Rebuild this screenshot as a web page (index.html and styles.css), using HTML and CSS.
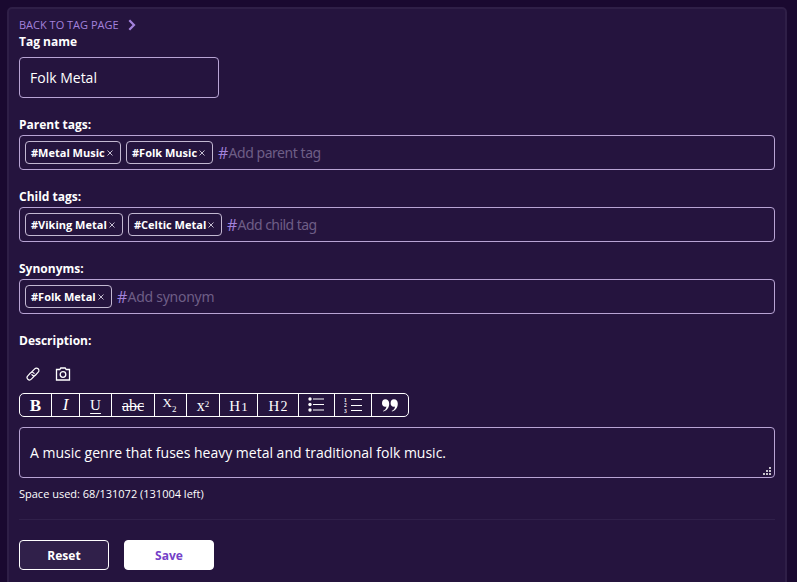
FILE: index.html
```html
<!DOCTYPE html>
<html lang="en">
<head>
<meta charset="utf-8">
<title>Edit tag</title>
<link rel="stylesheet" href="styles.css">
</head>
<body>
<main class="panel">
  <a class="back">BACK TO TAG PAGE
    <svg class="chevron" width="8" height="12" viewBox="0 0 8 12"><path d="M1.3 1.2 6 6 1.3 10.8" fill="none" stroke="currentColor" stroke-width="2.2"/></svg>
  </a>
  <div class="label">Tag name</div>
  <div class="name-input">Folk Metal</div>

  <div class="label spaced">Parent tags:</div>
  <div class="tags">
    <span class="chip c96">#Metal Music<svg class="x" viewBox="0 0 6 6"><path d="M.5.5l5 5m0-5l-5 5"/></svg></span>
    <span class="chip c87">#Folk Music<svg class="x" viewBox="0 0 6 6"><path d="M.5.5l5 5m0-5l-5 5"/></svg></span>
    <span class="hash">#</span><span class="hint">Add parent tag</span>
  </div>

  <div class="label spaced">Child tags:</div>
  <div class="tags">
    <span class="chip c98">#Viking Metal<svg class="x" viewBox="0 0 6 6"><path d="M.5.5l5 5m0-5l-5 5"/></svg></span>
    <span class="chip c94">#Celtic Metal<svg class="x" viewBox="0 0 6 6"><path d="M.5.5l5 5m0-5l-5 5"/></svg></span>
    <span class="hash">#</span><span class="hint child">Add child tag</span>
  </div>

  <div class="label spaced">Synonyms:</div>
  <div class="tags">
    <span class="chip c87">#Folk Metal<svg class="x" viewBox="0 0 6 6"><path d="M.5.5l5 5m0-5l-5 5"/></svg></span>
    <span class="hash">#</span><span class="hint synonym">Add synonym</span>
  </div>

  <div class="label spaced">Description:</div>
  <div class="media">
    <svg width="14" height="14" viewBox="0 0 14 14" fill="none" stroke="#fff" stroke-width="1.2" stroke-linecap="round"><path d="M5.2 5.5 8.7 1.8a2.4 2.4 0 0 1 3.5 3.4L9.6 8a2.4 2.4 0 0 1-3.7-.3M8.8 8.5 5.3 12.2a2.4 2.4 0 0 1-3.5-3.4L4.4 6a2.4 2.4 0 0 1 3.7.3"/></svg>
    <svg width="16" height="14" viewBox="0 0 16 14" fill="none" stroke="#fff" stroke-width="1.3"><path d="M1.5 2.5h3.3l1-1.5h4.4l1 1.5H14.5v10.5H1.5z"/><circle cx="8" cy="7.5" r="2.8"/></svg>
  </div>
  <div class="toolbar">
    <span class="b">B</span>
    <span class="i">I</span>
    <span class="u">U</span>
    <span class="s">abc</span>
    <span class="sub">X<small>2</small></span>
    <span class="sup">x<small>2</small></span>
    <span class="h">H<i class="one">1</i></span>
    <span class="h">H<i>2</i></span>
    <span class="icon"><svg width="16" height="15" viewBox="0 0 16 15"><g fill="#fff"><circle cx="2" cy="2" r="1.7"/><circle cx="2" cy="7.5" r="1.7"/><circle cx="2" cy="13" r="1.7"/></g><path d="M5 2h11M5 7.5h11M5 13h11" stroke="#fff"/></svg></span>
    <span class="icon"><svg width="18" height="18" viewBox="0 0 18 18"><g class="nums"><text x="0" y="5.5">1</text><text x="0" y="11">2</text><text x="0" y="16.5">3</text></g><path d="M7 3.5h11M7 9.5h11M7 14.5h11" stroke="#fff"/></svg></span>
    <span><svg width="16" height="13" viewBox="0 0 16 13" fill="#fff"><path id="q" d="M3.3.3C5.7.3 7.2 2 7.2 4.8c0 3.9-2.5 6.9-5.7 7.8L1 11.9c2-.9 3.3-2.5 3.4-4.5-.4.2-.8.3-1.3.3C1.3 7.7 0 6.3 0 4.2 0 1.9 1.3.3 3.3.3z"/><use href="#q" x="8.6"/></svg></span>
  </div>
  <div class="desc"><span>A music genre that fuses heavy metal and traditional folk music.</span>
    <svg class="grip" width="8" height="8" viewBox="0 0 8 8"><path d="M6 0h2v2H6zM3 3h2v2H3zM6 3h2v2H6zM0 6h2v2H0zM3 6h2v2H3zM6 6h2v2H6z" fill="#c8c4cc"/></svg>
  </div>
  <div class="space">Space used: 68/131072 (131004 left)</div>
  <div class="actions"><button class="btn">Reset</button><button class="btn save">Save</button></div>
</main>
</body>
</html>
```
FILE: styles.css
```css
* { box-sizing: border-box; }
body {
  margin: 0;
  padding: 7px 10px 0 7px;
  height: 582px;
  overflow: hidden;
  background: #1a0930;
  color: #fff;
  font-family: "Open Sans", sans-serif;
}
svg { display: block; }
.panel {
  height: 600px;
  padding: 8px 10px 0;
  border: 2px solid #2f1f47;
  border-radius: 5px;
  background: #25143e;
}
.back {
  display: flex;
  align-items: center;
  height: 16px;
  font-size: 11px;
  line-height: 16px;
  color: #a382dc;
}
.chevron { margin-left: 9.5px; }
.label {
  height: 16px;
  margin-top: 1px;
  font-size: 12px;
  font-weight: 700;
  line-height: 16px;
}
.label.spaced { margin-top: 19px; }
.name-input {
  width: 200px;
  height: 41px;
  margin-top: 7px;
  padding: 0 10px;
  border: 1px solid #b8a4d4;
  border-radius: 4px;
  font-size: 14px;
  line-height: 39px;
}
.tags {
  display: flex;
  align-items: center;
  height: 35px;
  margin-top: 2px;
  padding: 0 5px;
  border: 1px solid #b8a4d4;
  border-radius: 4px;
}
.chip {
  display: flex;
  align-items: center;
  justify-content: space-between;
  height: 23px;
  margin-right: 5px;
  padding: 0 7px 0 5px;
  border: 1px solid #c3b8d2;
  border-radius: 4px;
  font-size: 11px;
  font-weight: 700;
  white-space: nowrap;
}
.c96 { width: 96px; }
.c87 { width: 87px; }
.c98 { width: 98px; }
.c94 { width: 94px; }
.x { width: 6px; height: 6px; fill: none; stroke: #d6cfe0; stroke-width: .9; }
.hash { width: 10.5px; font-size: 16px; color: #a382dc; }
.hint {
  font-family: "Noto Sans", sans-serif;
  font-size: 14px;
  letter-spacing: -.45px;
  color: #6e5e86;
}
.hint.child { letter-spacing: -.54px; }
.hint.synonym { letter-spacing: -.26px; }
.media {
  display: flex;
  gap: 15px;
  margin-top: 18px;
  padding-left: 7px;
}
.toolbar {
  display: grid;
  grid-template-columns: 32px 28px 32px 43px 32px 33px 38px 41px 36px 37px 36px;
  grid-template-rows: 22px;
  width: 390px;
  height: 24px;
  margin-top: 12px;
  border: 1px solid #fff;
  border-radius: 5px;
  font-family: "Liberation Serif", serif;
}
.toolbar > span {
  display: flex;
  align-items: center;
  justify-content: center;
  min-height: 0;
  border-right: 1px solid #fff;
  font-size: 15px;
  line-height: 20px;
}
.toolbar > span:last-child { border-right: 0; }
.toolbar .b { padding-top: 2px; font-size: 17px; font-weight: 700; }
.toolbar .i { font-size: 17px; font-style: italic; }
.toolbar .u { padding-bottom: 1px; text-decoration: underline; text-underline-offset: 3px; }
.toolbar .s { padding-top: 1px; font-size: 16px; text-decoration: line-through; }
.toolbar small { font-size: 9px; line-height: 10px; }
.toolbar .sub { padding: 0 2px 5px 0; font-size: 13px; }
.toolbar .sub small { margin-top: 12px; }
.toolbar .sup { padding-top: 2px; font-size: 16px; }
.toolbar .sup small { margin-top: -5px; }
.toolbar .h { padding-top: 2px; }
.toolbar .h i { margin-left: 1px; padding-top: 1px; font-size: 14px; font-style: normal; }
.toolbar .h .one { font-size: 13px; }
.toolbar .icon { padding: 0 1px 1px 0; }
.nums { font: 700 5.5px "Liberation Serif", serif; fill: #fff; }
.desc {
  position: relative;
  height: 51px;
  margin-top: 10px;
  padding: 0 10px;
  border: 1px solid #b8a4d4;
  border-radius: 4px;
  font-size: 14px;
  line-height: 49px;
}
.grip { position: absolute; right: 3px; bottom: 2px; }
.space { height: 16px; margin-top: 8px; font-size: 11px; line-height: 16px; }
.actions {
  display: flex;
  gap: 15px;
  margin-top: 17px;
  padding-top: 20px;
  border-top: 1px solid #30204a;
}
.btn {
  width: 90px;
  height: 30px;
  padding: 0;
  border: 1px solid #fff;
  border-radius: 4px;
  background: #30204a;
  color: #fff;
  font: 700 12px "Open Sans", sans-serif;
}
.btn.save { background: #fff; color: #7541c8; }
```
